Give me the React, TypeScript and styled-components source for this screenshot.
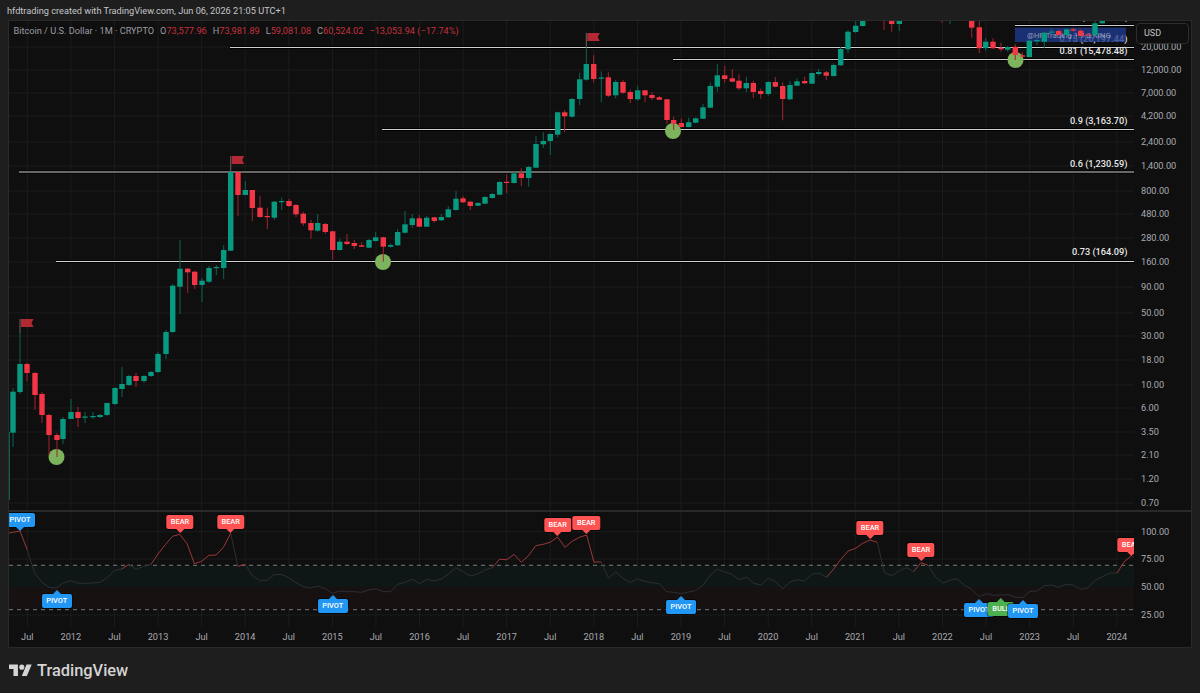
import React from 'react'
import styled, { createGlobalStyle } from 'styled-components'

type Candle = [number, number, number, number, number, 'g' | 'r']

// x, wick top, body top, body bottom, wick bottom, colour (page pixels)
const CANDLES: Candle[] = [
  [9.5, 432, 466, 466, 500, 'g'], [13, 388, 391.7, 432.7, 447, 'g'], [20, 333, 364, 392, 394, 'g'],
  [27, 363, 364, 373, 381, 'r'], [35, 372, 373, 395, 410, 'r'], [42, 392, 394, 415, 423, 'r'],
  [49, 414, 415, 435, 455, 'r'], [57, 433, 435, 440, 457, 'r'], [63, 417, 419, 439, 444, 'g'],
  [71, 399, 412, 419, 419, 'g'], [78, 407, 412, 418, 427, 'r'], [85, 412, 416.5, 417.5, 423, 'g'],
  [93, 412, 416, 417, 419, 'g'], [100, 414, 415, 417, 418, 'g'], [107, 403, 403, 415, 416, 'g'],
  [115, 387, 388, 404, 405, 'g'], [122, 367, 384, 389, 397, 'g'], [129, 375, 376, 385, 386, 'g'],
  [136, 373, 376, 381, 387, 'r'], [144, 375, 376, 381, 383, 'g'], [151, 371, 372, 376, 377, 'g'],
  [158, 352, 354, 372, 373, 'g'], [166, 330, 332, 354, 359, 'g'], [172.7, 284, 285.7, 332, 333, 'g'],
  [180, 240, 268.7, 286.7, 314, 'g'], [187.7, 268, 268.7, 272.3, 293, 'r'], [194.7, 271, 271.7, 285, 289, 'r'],
  [202, 278, 280.7, 285, 302, 'g'], [209, 266, 268, 281.7, 283, 'g'], [216.3, 265, 267, 268, 275, 'g'],
  [223.7, 245, 250, 268, 279, 'g'], [230.7, 172, 172, 250.7, 251, 'g'], [238, 172, 172, 195, 216, 'r'],
  [245.3, 181, 190, 195, 195, 'g'], [252.3, 190, 190, 208, 221, 'r'], [260, 195.7, 207.7, 217, 217.7, 'r'],
  [267.3, 207.7, 216, 217, 229, 'r'], [274.3, 201, 201.7, 217.7, 220, 'g'], [281.7, 197.7, 201, 202, 210, 'g'],
  [289, 199, 201, 206, 207, 'r'], [296, 204, 205, 214.3, 217, 'r'], [303.3, 212, 213.7, 223.3, 226, 'r'],
  [311, 220, 223, 230.3, 238.7, 'r'], [317.7, 214, 223, 230.7, 231.7, 'g'], [325.3, 223, 224, 232, 234, 'r'],
  [332.7, 230.7, 231.3, 250, 260, 'r'], [339.7, 239, 241.7, 250, 250.7, 'g'], [347, 234, 241.7, 244, 245, 'r'],
  [354.3, 240, 243, 246, 249, 'r'], [361.7, 242, 245.3, 246.7, 247, 'r'], [369, 239, 240, 247.7, 248, 'g'],
  [375.7, 232, 237.3, 241, 241.7, 'g'], [383.3, 236.7, 237.3, 246.7, 261.7, 'r'], [390.7, 243.7, 245, 246.7, 247.7, 'g'],
  [397.7, 229, 232, 245.3, 246, 'g'], [405, 211, 224.3, 232.7, 233.7, 'g'], [412.3, 214, 218.3, 225, 227.7, 'g'],
  [419.3, 215, 218.3, 226.7, 227, 'r'], [426.7, 216, 217.7, 226.7, 227, 'g'], [434.3, 216.7, 217.3, 221, 222.7, 'r'],
  [441.3, 214, 217, 220.3, 220.7, 'g'], [448.3, 206, 209.3, 217.3, 217.7, 'g'], [456, 191, 198.7, 210, 210.5, 'g'],
  [463, 196, 198.3, 202.3, 203, 'r'], [470.3, 200.7, 201.7, 206, 210, 'r'], [478, 202, 203, 205.7, 206, 'g'],
  [485, 196, 197, 203.7, 204, 'g'], [492.3, 193, 194, 198, 198.5, 'g'], [499.7, 181, 182, 194.7, 195, 'g'],
  [506.7, 174.3, 181.8, 182.8, 193.3, 'r'], [514, 172, 173.3, 183, 183.5, 'g'], [521.3, 168.3, 173.3, 178, 186, 'r'],
  [528.7, 166, 167, 178, 186.7, 'g'], [536, 136, 144, 167.7, 168, 'g'], [543.3, 132.3, 141, 144.3, 148, 'g'],
  [550.3, 133.3, 134, 141, 155, 'g'], [557.7, 111.7, 112.3, 134.7, 137.7, 'g'], [564.7, 110, 112.3, 116.3, 132.3, 'r'],
  [572, 98, 99, 116.7, 117.5, 'g'], [579.7, 72.7, 79.3, 99, 105.3, 'g'], [586.3, 48, 64, 79.7, 80.7, 'g'],
  [593.7, 55, 64, 79, 82.7, 'r'], [601.3, 71.3, 77.5, 78.5, 102.3, 'g'], [608.3, 72.3, 77.3, 95.7, 97, 'r'],
  [615.7, 80, 82, 95.3, 98.3, 'g'], [623, 80, 82, 92.7, 94, 'r'], [630.3, 89.7, 92, 99, 103, 'r'],
  [637.7, 85.7, 90.3, 99.3, 100.7, 'g'], [645, 90, 90.3, 95.3, 102.3, 'r'], [652, 92, 95, 98, 100, 'r'],
  [659.3, 96, 97.3, 99.7, 100, 'r'], [667, 99, 99.3, 120, 124, 'r'], [673.7, 116.7, 120, 123.7, 130, 'r'],
  [681.3, 118.3, 123, 127, 127.3, 'r'], [688.7, 117.7, 122.3, 127, 127.3, 'g'], [695.7, 117.7, 118.3, 122.7, 123.3, 'g'],
  [703, 104, 107.3, 118.7, 119, 'g'], [710.3, 82.7, 86, 107.7, 108, 'g'], [717.3, 64, 75.3, 86.7, 91.7, 'g'],
  [724.7, 66, 75.3, 79, 82.7, 'r'], [732.3, 69.3, 78.3, 81.7, 82.3, 'r'], [739, 74.3, 80.7, 88.3, 90, 'r'],
  [746.3, 76.7, 83, 88.3, 92.3, 'g'], [753.3, 80.7, 83, 92, 98, 'r'], [760.7, 88.7, 91, 94, 98.7, 'r'],
  [768.3, 81.3, 82, 94, 95.7, 'g'], [775.3, 77, 82, 86.7, 87.3, 'r'], [782.7, 82.3, 86, 99, 120.3, 'r'],
  [790, 81, 85, 99.3, 100, 'g'], [797, 78.3, 81.3, 85.7, 86, 'g'], [804.7, 76.7, 81, 83.3, 84, 'r'],
  [812, 72.7, 73, 83.7, 84, 'g'], [818.7, 69, 72, 74, 75.7, 'g'], [826.3, 71, 72.3, 75.7, 80, 'r'],
  [833.7, 63.3, 65, 76, 76.7, 'g'], [840.7, 46.7, 49, 65.3, 66, 'g'], [848, 30, 31.7, 49.3, 53, 'g'],
  [855.7, 20, 25.7, 32, 33, 'g'], [862.7, 15, 15, 26, 26.5, 'g'], [884, 10, 10, 21, 30, 'r'],
  [891.7, 10, 10, 24, 31.7, 'r'], [899.3, 10, 10, 24, 31, 'g'], [942, 10, 10, 15, 22.7, 'r'],
  [950, 10, 10, 15, 24, 'g'], [971.7, 10, 10, 27.7, 37.7, 'r'], [979.3, 10, 27.3, 48.3, 53.3, 'r'],
  [985.7, 38, 41.7, 48.3, 50.7, 'g'], [993, 38.3, 41.7, 48.3, 49, 'r'], [1001, 42.7, 47.7, 49.3, 51.7, 'r'],
  [1007.7, 46, 47, 49.7, 51.7, 'g'], [1015.3, 44, 46.7, 55, 60, 'r'], [1022.3, 52.3, 55.3, 56.7, 57.3, 'r'],
  [1029.3, 40, 40.7, 57, 57.3, 'g'], [1037, 36, 40, 41, 45, 'g'], [1044.3, 31.7, 32.7, 41.7, 48.3, 'g'],
  [1051.7, 28, 31.5, 32.5, 34, 'g'], [1058.7, 29.3, 31, 35, 35.7, 'r'], [1066.7, 28.3, 29.3, 35, 36.7, 'g'],
  [1073.3, 27.7, 29.3, 30.7, 31.7, 'r'], [1080.7, 29, 30.7, 36, 36.7, 'r'], [1088, 33, 34.5, 35.5, 36, 'r'],
  [1095, 20, 23.3, 35, 35.7, 'g'], [1102.3, 10, 10, 23.3, 24, 'g'],
]

// RSI values read as pixel rows, one a month; x and y come from toRsiPoint
const RSI = [
  86, 82, 78, 135, 203, 232, 247, 249, 233, 227, 235, 235, 234, 232, 218, 197, 192, 178, 193, 184, 179, 147, 119, 94,
  88, 116, 176, 169, 151, 150, 127, 85, 184, 178, 213, 226, 226, 209, 208, 218, 233, 245, 249, 243, 251, 265, 258, 260,
  260, 262, 255, 251, 260, 260, 238, 232, 223, 236, 223, 228, 222, 207, 188, 200, 213, 207, 195, 188, 163, 164, 148, 172,
  152, 122, 118, 112, 96, 127, 109, 97, 90, 171, 171, 219, 201, 220, 233, 221, 229, 233, 236, 260, 262, 266, 261, 257,
  241, 210, 193, 201, 208, 224, 217, 235, 240, 219, 230, 251, 231, 224, 228, 207, 205, 217, 192, 163, 138, 130, 115, 105,
  112, 203, 212, 198, 188, 200, 173, 181, 216, 234, 226, 221, 241, 253, 275, 266, 271, 270, 269, 277, 278, 259, 258, 242,
  240, 247, 238, 241, 253, 248, 225, 215, 204, 204, 170, 152, 165,
]
const RSI_RED: [number, number][] = [[0, 3], [16, 17], [20, 31], [32, 33], [67, 82], [113, 120], [125, 127], [153, 155]]

const toRsiPoint = (v: number, i: number) => `${(5.47 + 7.265 * i).toFixed(1)},${(505 + v / 3).toFixed(1)}`

const rsiPoints = (from: number, to: number) =>
  RSI.slice(from, to + 1).map((v, i) => toRsiPoint(v, from + i)).join(' ')

const PRICE_TICKS: [string, number][] = [
  ['20,000.00', 47], ['12,000.00', 70], ['7,000.00', 93], ['4,200.00', 116], ['2,400.00', 142], ['1,400.00', 166],
  ['800.00', 191], ['480.00', 214], ['280.00', 238], ['160.00', 262], ['90.00', 287], ['50.00', 313], ['30.00', 336],
  ['18.00', 360], ['10.00', 385], ['6.00', 408], ['3.50', 432], ['2.10', 455], ['1.20', 479], ['0.70', 503],
]
const RSI_TICKS: [string, number][] = [['100.00', 531.7], ['75.00', 559], ['50.00', 587.3], ['25.00', 615]]

const YEARS = Array.from({ length: 13 }, (_, i) => 2012 + i)
const TIME_LABELS = ['Jul', ...YEARS.flatMap((y, i) => (i < 12 ? [String(y), 'Jul'] : [String(y)]))]
const GRID_X = TIME_LABELS.map((_, i) => 27.3 + 43.58 * i)

const FIB_LINES = [
  { from: 1015, y: 25.5 },
  { from: 230, y: 47.5 },
  { from: 673, y: 59.5 },
  { from: 382, y: 129.5 },
  { from: 19, y: 172 },
  { from: 56, y: 261.5 },
]
const FIB_LABELS = [
  { text: '0.81 (15,478.48)', y: 53.5 },
  { text: '0.9 (3,163.70)', y: 123.5 },
  { text: '0.6 (1,230.59)', y: 166.5 },
  { text: '0.73 (164.09)', y: 254.5 },
]
const LOWS = [[56.5, 457], [383, 262], [673, 131], [1015.5, 60]]
const FLAGS = [[20, 319, 333], [230.7, 156, 172], [586.3, 33, 48]]

type TagKind = 'bear' | 'pivot' | 'bull'
const TAGS: { kind: TagKind; text: string; x: number; y: number }[] = [
  { kind: 'pivot', text: 'PIVOT', x: 20, y: 512.5 },
  { kind: 'pivot', text: 'PIVOT', x: 56.7, y: 593.7 },
  { kind: 'bear', text: 'BEAR', x: 180, y: 515.3 },
  { kind: 'bear', text: 'BEAR', x: 230.7, y: 515.3 },
  { kind: 'pivot', text: 'PIVOT', x: 332.7, y: 599.3 },
  { kind: 'bear', text: 'BEAR', x: 557.7, y: 517.7 },
  { kind: 'bear', text: 'BEAR', x: 586.3, y: 516 },
  { kind: 'pivot', text: 'PIVOT', x: 681, y: 600 },
  { kind: 'bear', text: 'BEAR', x: 870, y: 521 },
  { kind: 'bear', text: 'BEAR', x: 921, y: 543.3 },
  { kind: 'bear', text: 'BEAR', x: 1131, y: 537.5 },
  { kind: 'pivot', text: 'PIVOT', x: 979, y: 602.7 },
  { kind: 'bull', text: 'BULL', x: 1001, y: 602 },
  { kind: 'pivot', text: 'PIVOT', x: 1023, y: 604 },
]
const TAG_COLORS: Record<TagKind, string> = { bear: '#ff5252', pivot: '#2196f3', bull: '#4caf50' }

const GlobalStyle = createGlobalStyle`
  html, body {
    margin: 0;
    background: #1e1e1e;
  }
`

const Page = styled.div`
  box-sizing: border-box;
  width: 1200px;
  height: 693px;
  display: flex;
  flex-direction: column;
  padding: 0 8px;
  overflow: hidden;
  background: #1e1e1e;
  font-family: Roboto, 'Liberation Sans', sans-serif;
`

const Caption = styled.div`
  height: 20px;
  line-height: 22px;
  margin-left: -1px;
  font-size: 9.2px;
  color: #c4c5c9;
  white-space: nowrap;
`

const Frame = styled.div`
  box-sizing: border-box;
  height: 628px;
  display: flex;
  flex-direction: column;
  background: #0f0f0f;
  border: 1px solid #2a2a2a;
`

const Row = styled.div`
  display: flex;
`

const Pane = styled.div<{ $h: number }>`
  position: relative;
  flex: none;
  width: 1125px;
  height: ${p => p.$h}px;
  overflow: hidden;

  svg {
    display: block;
  }
`

const Divider = styled.div`
  height: 2px;
  background: #292929;
`

const Axis = styled.div`
  position: relative;
  flex: 1;
  padding-left: 7px;
`

const Tick = styled.div<{ $gap: number }>`
  height: 14px;
  line-height: 14px;
  margin-top: ${p => p.$gap}px;
  font-size: 9.2px;
  color: #a9abb1;
`

const UnitButton = styled.div`
  position: absolute;
  top: 2px;
  left: 2px;
  box-sizing: border-box;
  width: 53px;
  height: 21px;
  padding-left: 7px;
  line-height: 19px;
  font-size: 9px;
  color: #c4c5c9;
  background: #0f0f0f;
  border: 1px solid #2e2e2e;
  border-radius: 4px;
`

const Legend = styled.div`
  position: absolute;
  top: 3px;
  left: 4.5px;
  display: flex;
  gap: 6px;
  line-height: 14px;
  font-size: 9.2px;
  color: #9a9ca3;
  white-space: nowrap;
`

const Quote = styled.span`
  color: #c62f3e;

  b {
    font-weight: 400;
    color: #9a9ca3;
  }
`

const Tag = styled.div.attrs<{ $x: number; $y: number }>(p => ({
  style: { left: p.$x - 9, top: p.$y - 512 },
}))<{ $x: number; $y: number; $color: string; $down: boolean }>`
  position: absolute;
  transform: translateX(-50%);
  padding: 0 4.5px;
  height: 14px;
  line-height: 14px;
  font-size: 7.4px;
  font-weight: 500;
  color: #fff;
  background: ${p => p.$color};
  border-radius: 2px;
  box-shadow: 0 0 0 1px rgba(0, 0, 0, 0.45);

  &::after {
    content: '';
    position: absolute;
    left: 50%;
    margin-left: -4px;
    border-left: 4px solid transparent;
    border-right: 4px solid transparent;
    ${p =>
      p.$down
        ? `top: 100%; border-top: 4px solid ${p.$color};`
        : `bottom: 100%; border-bottom: 4px solid ${p.$color};`}
  }
`

const TimeAxis = styled.div`
  display: flex;
  height: 20px;
  margin-left: -3.5px;
  line-height: 20px;
  font-size: 9.2px;
  color: #a9abb1;
`

const TimeLabel = styled.div`
  flex: none;
  width: 43.58px;
  text-align: center;
`

const Footer = styled.div`
  flex: 1;
  display: flex;
  align-items: center;
  gap: 5px;
  padding: 0 0 0 1px;
  font-size: 16.4px;
  font-weight: 500;
  color: #d4d4d4;
`

const FibText = styled.text`
  font-family: Roboto, 'Liberation Sans', sans-serif;
  font-size: 9.2px;
  font-weight: 500;
  fill: #e8e8e8;
  text-anchor: end;
`

const Watermark = styled.text`
  font-family: Roboto, 'Liberation Sans', sans-serif;
  font-size: 7.8px;
  fill: rgba(255, 255, 255, 0.5);
`

const Ticks: React.FC<{ items: [string, number][]; origin: number }> = ({ items, origin }) => (
  <>
    {items.map(([label, y], i) => (
      <Tick key={label} $gap={i === 0 ? y - origin - 7 : y - items[i - 1][1] - 14}>
        {label}
      </Tick>
    ))}
  </>
)

const GridX: React.FC<{ top: number; bottom: number }> = ({ top, bottom }) => (
  <>
    {GRID_X.map(x => (
      <line key={x} x1={x} x2={x} y1={top} y2={bottom} stroke="#1c1c1c" />
    ))}
  </>
)

const CandleMark: React.FC<{ c: Candle }> = ({ c: [x, wickTop, top, bottom, wickBottom, tone] }) => (
  <>
    <line x1={x} x2={x} y1={wickTop} y2={wickBottom} stroke={tone === 'g' ? '#0a6455' : '#a3232f'} strokeWidth="1" />
    {x > 10 && (
      <rect
        x={x - 2.7}
        y={top}
        width="5.4"
        height={Math.max(bottom - top, 1.2)}
        fill={tone === 'g' ? '#089981' : '#f23645'}
      />
    )}
  </>
)

const PriceChart: React.FC = () => (
  <svg width="1125" height="489" viewBox="9 21 1125 489">
    <GridX top={21} bottom={510} />
    {PRICE_TICKS.map(([label, y]) => (
      <line key={label} x1="9" x2="1134" y1={y} y2={y} stroke="#1c1c1c" />
    ))}
    {FIB_LINES.map(l => (
      <g key={l.y}>
        <line x1={l.from} x2="1134" y1={l.y} y2={l.y} stroke="#000" strokeWidth="3" />
        <line x1={l.from} x2="1134" y1={l.y} y2={l.y} stroke="#cfcfcf" strokeWidth="1.2" />
      </g>
    ))}
    {LOWS.map(([x, y]) => (
      <circle key={x} cx={x} cy={y} r="8" fill="#7db35c" />
    ))}
    {FIB_LABELS.map(l => (
      <FibText key={l.y} x="1127.5" y={l.y}>
        {l.text}
      </FibText>
    ))}
    <FibText x="1127.5" y="41.5">0.75 (26,197.44)</FibText>
    <rect x="1015" y="27.7" width="111" height="14.3" fill="#1f3a8e" opacity="0.78" />
    <Watermark x="1027" y="37.5">@HF Trading 1.7.3 KING</Watermark>
    <path d="M1084 21v1M1126 21v1" stroke="#bbb" />
    {FLAGS.map(([x, top, foot]) => (
      <g key={x}>
        <line x1={x} x2={x} y1={top} y2={foot} stroke="#666" strokeWidth="1" />
        <path d={`M${x + 1} ${top} h12.5 l-2 4 l2 4 h-12.5 z`} fill="#b22833" />
      </g>
    ))}
    {CANDLES.map(c => (
      <CandleMark key={c[0]} c={c} />
    ))}
  </svg>
)

const RsiChart: React.FC = () => {
  let cursor = 0
  const grey: string[] = []
  RSI_RED.forEach(([from, to]) => {
    if (from > cursor) grey.push(rsiPoints(cursor, from))
    cursor = to
  })
  grey.push(rsiPoints(cursor, RSI.length - 1))

  return (
    <svg width="1125" height="115" viewBox="9 512 1125 115">
      <GridX top={512} bottom={627} />
      {RSI_TICKS.map(([label, y]) => (
        <line key={label} x1="9" x2="1134" y1={y} y2={y} stroke="#1c1c1c" />
      ))}
      <rect x="9" y="565.3" width="1125" height="22" fill="#0e1715" />
      <rect x="9" y="587.3" width="1125" height="22.4" fill="#181112" />
      <line x1="9" x2="1134" y1="565.3" y2="565.3" stroke="#7a7a7a" strokeDasharray="4 4" />
      <line x1="9" x2="1134" y1="609.7" y2="609.7" stroke="#7a7a7a" strokeDasharray="4 4" />
      {grey.map(points => (
        <polyline key={points} points={points} fill="none" stroke="#2b2f35" strokeWidth="1" />
      ))}
      {RSI_RED.map(([from, to]) => (
        <polyline key={from} points={rsiPoints(from, to)} fill="none" stroke="#9c3638" strokeWidth="1" />
      ))}
    </svg>
  )
}

const Logo: React.FC = () => (
  <svg width="23" height="18" viewBox="0 0 36 28" fill="#d4d4d4">
    <path d="M14 22H7V11H0V4h14v18zM28 22h-8l7.5-18h8L28 22z" />
    <circle cx="20" cy="8" r="4" />
  </svg>
)

const App: React.FC = () => (
  <Page>
    <GlobalStyle />
    <Caption>hfdtrading created with TradingView.com, Jun 06, 2026 21:05 UTC+1</Caption>
    <Frame>
      <Row>
        <Pane $h={489}>
          <PriceChart />
          <Legend>
            <span>Bitcoin / U.S. Dollar · 1M · CRYPTO</span>
            <Quote><b>O</b>73,577.96</Quote>
            <Quote><b>H</b>73,981.89</Quote>
            <Quote><b>L</b>59,081.08</Quote>
            <Quote><b>C</b>60,524.02</Quote>
            <Quote>−13,053.94 (−17.74%)</Quote>
          </Legend>
        </Pane>
        <Axis>
          <Ticks items={PRICE_TICKS} origin={21} />
          <UnitButton>USD</UnitButton>
        </Axis>
      </Row>
      <Divider />
      <Row>
        <Pane $h={115}>
          <RsiChart />
          {TAGS.map(t => (
            <Tag key={`${t.text}${t.x}`} $x={t.x} $y={t.y} $color={TAG_COLORS[t.kind]} $down={t.y < 560}>
              {t.text}
            </Tag>
          ))}
        </Pane>
        <Axis>
          <Ticks items={RSI_TICKS} origin={512} />
        </Axis>
      </Row>
      <TimeAxis>
        {TIME_LABELS.map((label, i) => (
          <TimeLabel key={`${label}${i}`}>{label}</TimeLabel>
        ))}
      </TimeAxis>
    </Frame>
    <Footer>
      <Logo />
      TradingView
    </Footer>
  </Page>
)

export default App
